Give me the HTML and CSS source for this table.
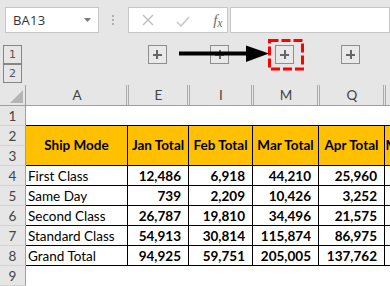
FILE: index.html
```html
<!DOCTYPE html>
<html>
<head>
<meta charset="utf-8">
<link rel="stylesheet" href="styles.css">
</head>
<body>
<div class="app">
  <div class="formula-bar">
    <div class="namebox">
      <span class="name">BA13</span>
      <svg class="caret" width="7" height="4" viewBox="0 0 7 4"><polygon points="0,0 7,0 3.5,4" fill="#7a7a7a"/></svg>
    </div>
    <div class="grip"><i></i><i></i><i></i></div>
    <div class="fx-buttons">
      <svg class="cancel" width="12" height="12" viewBox="0 0 12 12"><path d="M1 1 L11 11 M11 1 L1 11" stroke="#bdbdbd" stroke-width="1.4" fill="none"/></svg>
      <svg class="enter" width="14" height="11" viewBox="0 0 14 11"><path d="M1 6 L5 10 L13 1" stroke="#c9c9c9" stroke-width="1.6" fill="none"/></svg>
      <span class="fx"><span class="fx-f">f</span><span class="fx-x">x</span></span>
    </div>
    <div class="formula-input"></div>
  </div>

  <div class="outline-bar cols">
    <div class="levels">
      <span class="level">1</span>
      <span class="level">2</span>
    </div>
    <div></div>
    <div class="plus-cell"><span class="plus"></span></div>
    <div class="plus-cell"><span class="plus"></span></div>
    <div class="plus-cell"><span class="plus"></span></div>
    <div class="plus-cell"><span class="plus"></span></div>
    <div></div>
  </div>

  <div class="sheet cols">
    <div class="corner"><svg width="25" height="20" viewBox="0 0 25 20"><polygon points="10,18 23,18 23,5" fill="#b4b4b4"/></svg></div>
    <div class="ch ch-first">A</div>
    <div class="ch">E</div>
    <div class="ch">I</div>
    <div class="ch">M</div>
    <div class="ch">Q</div>
    <div class="ch ch-last"></div>

    <div class="rh">1</div>
    <div class="c r1"></div><div class="c r1"></div><div class="c r1"></div><div class="c r1"></div><div class="c r1"></div><div class="c r1"></div>

    <div class="rh">2</div>
    <div class="t hd">Ship Mode</div>
    <div class="t hd">Jan Total</div>
    <div class="t hd">Feb Total</div>
    <div class="t hd">Mar Total</div>
    <div class="t hd">Apr Total</div>
    <div class="t hd">May Total</div>
    <div class="rh">3</div>

    <div class="rh">4</div>
    <div class="t tx">First Class</div>
    <div class="t num">12,486</div><div class="t num">6,918</div><div class="t num">44,210</div><div class="t num">25,960</div><div class="t num"></div>

    <div class="rh">5</div>
    <div class="t tx">Same Day</div>
    <div class="t num">739</div><div class="t num">2,209</div><div class="t num">10,426</div><div class="t num">3,252</div><div class="t num"></div>

    <div class="rh">6</div>
    <div class="t tx">Second Class</div>
    <div class="t num">26,787</div><div class="t num">19,810</div><div class="t num">34,496</div><div class="t num">21,575</div><div class="t num"></div>

    <div class="rh">7</div>
    <div class="t tx">Standard Class</div>
    <div class="t num">54,913</div><div class="t num">30,814</div><div class="t num">115,874</div><div class="t num">86,975</div><div class="t num"></div>

    <div class="rh">8</div>
    <div class="t tx">Grand Total</div>
    <div class="t num">94,925</div><div class="t num">59,751</div><div class="t num">205,005</div><div class="t num">137,762</div><div class="t num"></div>

    <div class="rh">9</div>
    <div class="c"></div><div class="c"></div><div class="c"></div><div class="c"></div><div class="c"></div><div class="c"></div>
  </div>

  <svg class="annotation" width="390" height="286" viewBox="0 0 390 286">
    <rect x="269.5" y="40.5" width="33" height="28.5" fill="none" stroke="#ff0000" stroke-width="3" stroke-dasharray="9 3"/>
    <rect x="179" y="51.5" width="69" height="4" fill="#000"/>
    <polygon points="246,45.5 269,53.5 246,62" fill="#000"/>
  </svg>
</div>
</body>
</html>
```

FILE: styles.css
```css
html, body {
  margin: 0;
  padding: 0;
}
body {
  width: 390px;
  height: 286px;
  overflow: hidden;
  background: #e6e6e6;
  font-family: Lato, "Open Sans", sans-serif;
}
.app {
  position: relative;
  width: 390px;
  height: 286px;
  overflow: hidden;
}

/* formula bar */
.formula-bar {
  display: flex;
  align-items: flex-start;
  height: 39px;
  box-sizing: border-box;
  padding: 7px 0 0 5px;
}
.namebox {
  width: 103px;
  height: 26px;
  box-sizing: border-box;
  border: 1px solid #c6c6c6;
  background: #fff;
  display: flex;
  align-items: center;
  justify-content: space-between;
  padding: 0 7px;
}
.name {
  font-family: "Open Sans", sans-serif;
  font-size: 13px;
  color: #333;
  letter-spacing: 0.2px;
}
.caret {
  display: block;
}
.grip {
  height: 26px;
  margin-left: 13px;
  display: flex;
  flex-direction: column;
  justify-content: center;
  gap: 2px;
}
.grip i {
  display: block;
  width: 2px;
  height: 2px;
  background: #b0b0b0;
}
.fx-buttons {
  width: 111px;
  height: 26px;
  margin-left: 14px;
  box-sizing: border-box;
  border: 1px solid #c6c6c6;
  background: #fff;
  display: flex;
  align-items: center;
}
.cancel {
  margin-left: 13px;
}
.enter {
  margin-left: 22px;
  margin-top: 2px;
}
.fx {
  margin-left: 23px;
  font-family: "Liberation Serif", serif;
  font-style: italic;
  color: #6d6d6d;
  font-size: 15px;
}
.fx-x {
  font-size: 12px;
  position: relative;
  top: 2px;
}
.formula-input {
  width: 160px;
  height: 26px;
  margin-left: 2px;
  flex: none;
  box-sizing: border-box;
  border: 1px solid #c6c6c6;
  background: #fff;
}

/* shared columns */
.cols {
  display: grid;
  grid-template-columns: 26px 102px 61px 64px 66px 66px 60px;
  width: 445px;
}

/* outline bar */
.outline-bar {
  height: 46px;
  box-sizing: border-box;
  padding-top: 6px;
}
.levels {
  display: flex;
  flex-direction: column;
  padding-left: 3px;
}
.level {
  width: 19px;
  height: 19px;
  box-sizing: border-box;
  border: 1px solid #868686;
  font-family: "DejaVu Sans", sans-serif;
  font-size: 11px;
  color: #555;
  text-align: center;
  line-height: 17px;
}
.plus-cell {
  display: flex;
  justify-content: center;
  padding-right: 3px;
}
.plus {
  position: relative;
  width: 19px;
  height: 19px;
  box-sizing: border-box;
  border: 1px solid #8e8e8e;
  background: #e9e9e9;
}
.plus::before,
.plus::after {
  content: "";
  position: absolute;
  background: #666;
}
.plus::before {
  left: 4px;
  top: 7.5px;
  width: 9px;
  height: 2px;
}
.plus::after {
  left: 7.5px;
  top: 4px;
  width: 2px;
  height: 9px;
}

/* sheet */
.sheet {
  grid-template-rows: 21px repeat(9, 20px);
}
.corner {
  box-sizing: border-box;
  border-right: 1px solid #9e9e9e;
  border-bottom: 1px solid #9e9e9e;
}
.corner svg {
  display: block;
}
.ch {
  box-sizing: border-box;
  border-bottom: 1px solid #9e9e9e;
  text-align: center;
  font-size: 13.5px;
  color: #444;
  line-height: 21px;
  box-shadow: inset 1px 0 0 #ababab, inset -1px 0 0 #e6e6e6, inset -2px 0 0 #ababab;
}
.ch-first {
  box-shadow: inset -1px 0 0 #e6e6e6, inset -2px 0 0 #ababab;
}
.ch-last {
  box-shadow: inset 1px 0 0 #ababab;
}
.rh {
  box-sizing: border-box;
  border-right: 1px solid #9e9e9e;
  border-bottom: 1px solid #d2d2d2;
  text-align: center;
  font-size: 13.5px;
  color: #444;
  line-height: 20px;
}
.c {
  background: #fff;
}
.r1 {
  box-sizing: border-box;
  border-bottom: 1px solid #000;
}
.t {
  box-sizing: border-box;
  background: #fff;
  border-right: 1px solid #000;
  border-bottom: 1px solid #000;
  font-size: 13.5px;
  color: #000;
  line-height: 20px;
  white-space: nowrap;
  overflow: hidden;
}
.hd {
  grid-row: span 2;
  background: #ffc000;
  font-weight: 700;
  text-align: center;
  line-height: 39px;
}
.tx {
  padding-left: 2px;
}
.num {
  font-weight: 700;
  text-align: right;
  padding-right: 7px;
}

.annotation {
  position: absolute;
  left: 0;
  top: 0;
  pointer-events: none;
}
```
